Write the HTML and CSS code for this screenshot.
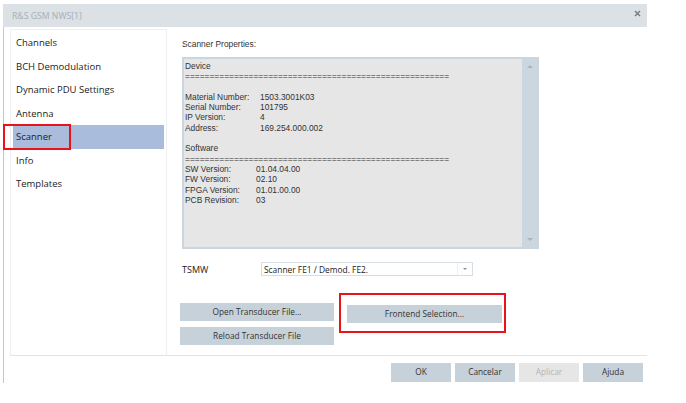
FILE: index.html
```html
<!DOCTYPE html>
<html>
<head>
<meta charset="utf-8">
<link rel="stylesheet" href="styles.css">
</head>
<body>
<div class="window">
  <div class="titlebar">
    <span class="title">R&amp;S GSM NWS[1]</span>
    <svg class="close" width="7" height="7" viewBox="0 0 7 7"><path d="M1 1L6 6M6 1L1 6" stroke="#7a7f84" stroke-width="1.5" fill="none"/></svg>
  </div>
  <div class="body">
    <div class="main">
      <ul class="nav">
        <li>Channels</li>
        <li>BCH Demodulation</li>
        <li>Dynamic PDU Settings</li>
        <li>Antenna</li>
        <li class="active">Scanner<span class="mark mark-scanner"></span></li>
        <li>Info</li>
        <li>Templates</li>
      </ul>
      <div class="content">
        <div class="section-label">Scanner Properties:</div>
        <div class="props">
          <div class="props-text">
            <div>Device</div>
            <div class="eq">======================================================</div>
            <div>&nbsp;</div>
            <div class="kv"><span class="k k1">Material Number:</span><span>1503.3001K03</span></div>
            <div class="kv"><span class="k k1">Serial Number:</span><span>101795</span></div>
            <div class="kv"><span class="k k1">IP Version:</span><span>4</span></div>
            <div class="kv"><span class="k k1">Address:</span><span>169.254.000.002</span></div>
            <div>&nbsp;</div>
            <div>Software</div>
            <div class="eq">======================================================</div>
            <div class="kv"><span class="k k2">SW Version:</span><span>01.04.04.00</span></div>
            <div class="kv"><span class="k k2">FW Version:</span><span>02.10</span></div>
            <div class="kv"><span class="k k2">FPGA Version:</span><span>01.01.00.00</span></div>
            <div class="kv"><span class="k k2">PCB Revision:</span><span>03</span></div>
          </div>
          <div class="scroll">
            <span class="arrow up"></span>
            <span class="arrow down"></span>
          </div>
        </div>
        <div class="field-row">
          <span class="field-label">TSMW</span>
          <div class="combo">
            <span class="combo-text">Scanner FE1 / Demod. FE2.</span>
            <span class="combo-btn"><span class="arrow down small"></span></span>
          </div>
        </div>
        <div class="btn-grid">
          <button class="btn">Open Transducer File...</button>
          <div class="btn-wrap">
            <button class="btn">Frontend Selection...</button>
            <span class="mark mark-frontend"></span>
          </div>
          <button class="btn">Reload Transducer File</button>
        </div>
      </div>
    </div>
    <div class="footer">
      <button class="btn fbtn">OK</button>
      <button class="btn fbtn">Cancelar</button>
      <button class="btn fbtn disabled">Aplicar</button>
      <button class="btn fbtn">Ajuda</button>
    </div>
  </div>
</div>
</body>
</html>
```

FILE: styles.css
```css
* { box-sizing: border-box; }
html, body { margin: 0; padding: 0; background: #fff; }
body { font-family: "Open Sans", "Noto Sans", sans-serif; color: #222; }

.window {
  margin: 4px 0 0 3px;
  width: 644px;
  position: relative;
}

.titlebar {
  height: 23px;
  background: #dbe1e5;
  display: flex;
  align-items: center;
  justify-content: space-between;
  padding: 0 6px 0 9px;
}
.title {
  font-size: 8.7px;
  color: #a7b0b8;
}
.close { display: block; margin-top: -4px; }

.body {
  border-left: 1px solid #c4c8cc;
  height: 356px;
  padding: 2px 0 0 6px;
}

.main {
  display: flex;
  height: 327px;
  border-bottom: 1px solid #dde4ea;
}

.nav {
  list-style: none;
  margin: 0;
  width: 157px;
  flex: none;
  border: 1px solid #eeeff0;
  border-bottom: none;
  padding: 1px 2px 0 2px;
  font-size: 9.5px;
  color: #222;
}
.nav li {
  height: 23.5px;
  display: flex;
  align-items: center;
  padding-left: 3px;
  position: relative;
}
.nav li.active { background: #aabcdc; }

.mark {
  position: absolute;
  border: 2px solid #e8141a;
  pointer-events: none;
}
.mark-scanner {
  left: -10px;
  top: -1px;
  width: 68px;
  height: 26px;
}

.content {
  flex: 1;
  padding: 10px 0 0 14px;
  font-family: "Liberation Sans", Arial, sans-serif;
}
.section-label {
  font-size: 8.4px;
  line-height: 11px;
  color: #333;
  margin-left: 1px;
}

.props {
  margin: 7px 0 0 1px;
  width: 357px;
  height: 192px;
  border: 2px solid #cbd5de;
  background: #e6e6e6;
  display: flex;
}
.props-text {
  flex: 1;
  padding: 2px 0 0 1px;
  font-size: 8.4px;
  line-height: 10.3px;
  color: #333;
  white-space: nowrap;
  overflow: hidden;
}
.eq { letter-spacing: 0; }
.kv { display: flex; }
.k1 { width: 75px; }
.k2 { width: 71px; }

.scroll {
  width: 15px;
  flex: none;
  background: #ccd6df;
  display: flex;
  flex-direction: column;
  justify-content: space-between;
  align-items: center;
  padding: 6px 0 6px;
}
.arrow {
  width: 0;
  height: 0;
  border-left: 3px solid transparent;
  border-right: 3px solid transparent;
}
.arrow.up { border-bottom: 3px solid #a9b3bb; }
.arrow.down { border-top: 3px solid #a9b3bb; }
.arrow.small { border-left-width: 2px; border-right-width: 2px; border-top: 2px solid #8a9097; }

.field-row {
  display: flex;
  align-items: center;
  margin-top: 13px;
  height: 14px;
}
.field-label {
  width: 79px;
  margin-left: 1px;
  font-family: "Open Sans", "Noto Sans", sans-serif;
  font-size: 9px;
  color: #222;
}
.combo {
  width: 212px;
  height: 14px;
  border: 1px solid #d6dde3;
  background: #fff;
  display: flex;
  align-items: center;
  justify-content: space-between;
}
.combo-text {
  font-family: "Open Sans", "Noto Sans", sans-serif;
  font-size: 8.4px;
  color: #222;
  padding-left: 2px;
}
.combo-btn {
  width: 15px;
  height: 12px;
  border-left: 1px solid #eef0f2;
  display: flex;
  align-items: center;
  justify-content: center;
}

.btn-grid {
  display: grid;
  grid-template-columns: 154px 155px;
  grid-auto-rows: 18px;
  column-gap: 13px;
  row-gap: 6px;
  margin: 27px 0 0 -1px;
}
.btn-wrap { position: relative; }
.btn-wrap .btn { width: 100%; height: 100%; }

.btn {
  border: none;
  margin: 0;
  padding: 0;
  background: #c7d1da;
  color: #333;
  font-family: "Open Sans", "Noto Sans", sans-serif;
  font-size: 8.3px;
  line-height: 1;
}
.mark-frontend {
  left: -8px;
  top: -10px;
  width: 167px;
  height: 40px;
}

.footer {
  display: flex;
  justify-content: flex-end;
  gap: 4px;
  padding: 7px 4px 0 0;
}
.fbtn {
  width: 60px;
  height: 19px;
}
.fbtn.disabled {
  background: #e6e6e6;
  color: #b4b4b4;
}
```
